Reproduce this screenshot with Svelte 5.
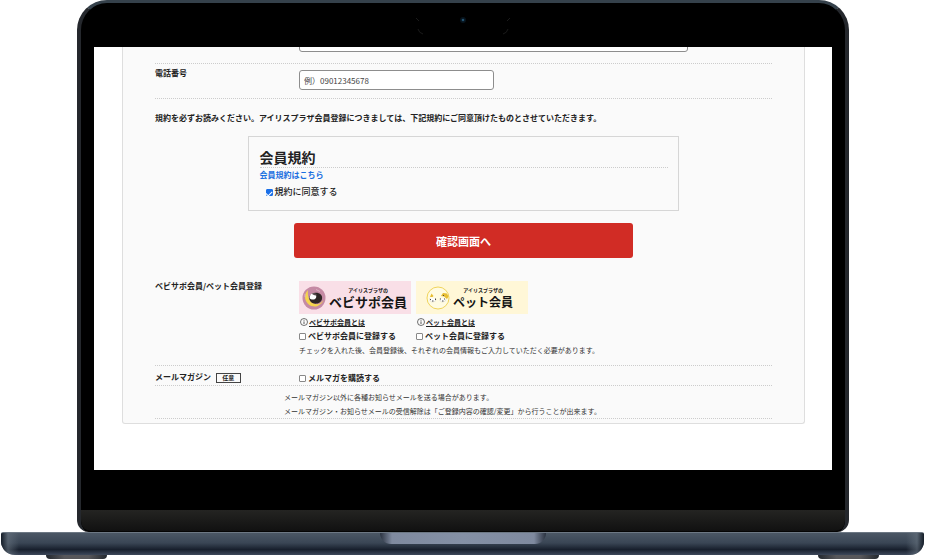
<script lang="ts">
  let phone = '';
  let address = '';
  let agreed = true;
  let babySupport = false;
  let pet = false;
  let mailMagazine = false;
</script>

<div class="laptop">
  <div class="lid">
    <div class="bezel-top">
      <svg width="94" height="20" viewBox="0 0 94 20" aria-hidden="true">
        <path d="M0 2l3 3M2 13q1 4 5 5M94 2l-3 3M92 13q-1 4-5 5" fill="none" stroke="#1b1b1b" />
        <circle cx="47" cy="4" r="3" fill="#07131c" />
        <circle cx="47" cy="4" r="1.3" fill="#23516e" />
      </svg>
    </div>

    <main class="screen">
      <form class="panel" on:submit|preventDefault>
        <div class="row cut">
          <span></span>
          <div class="clip">
            <input class="text-field wide" type="text" aria-label="住所" bind:value={address} />
          </div>
        </div>

        <div class="row phone">
          <label class="heading" for="phone">電話番号</label>
          <input
            id="phone"
            class="text-field"
            type="tel"
            placeholder="例）09012345678"
            bind:value={phone}
          />
        </div>

        <p class="lead">規約を必ずお読みください。アイリスプラザ会員登録につきましては、下記規約にご同意頂けたものとさせていただきます。</p>

        <section class="terms">
          <h2>会員規約</h2>
          <a class="terms-link" href="#terms">会員規約はこちら</a>
          <label class="check agree">
            <input type="checkbox" bind:checked={agreed} />
            規約に同意する
          </label>
        </section>

        <button class="submit" type="submit">確認画面へ</button>

        <div class="row clubs">
          <span class="heading">ベビサポ会員/ペット会員登録</span>
          <div>
            <div class="club-list">
              <div class="club">
                <div class="banner pink">
                  <svg width="24" height="24" viewBox="0 0 24 24" aria-hidden="true">
                    <circle cx="12" cy="12" r="11.5" fill="#c58aa4" />
                    <path d="M6 4A9.500 9.500 0 1 0 21.500 14C18 20 10 19 7.500 14C6 11 5.500 7 6 4Z" fill="#f5d44e" />
                    <path d="M9 16c-3-3-2-8 3-9 5-1 9 2 8 6-1 5-8 6-11 3z" fill="#2d2524" />
                    <path d="M8 10c1-3 4-3 6-1 1 3-1 5-3.500 4.500-2 0-3.500-1-2.500-3.500z" fill="#fff" />
                    <path d="M10 8c2-2 4-1 5 1-2 1-3 0-5-1z" fill="#54484a" />
                    <path d="M14 3.500l4 2M3 8v3" stroke="#dcb2c3" />
                  </svg>
                  <span class="banner-text">
                    <small>アイリスプラザの</small>
                    <strong>ベビサポ会員</strong>
                  </span>
                </div>
                <a class="about" href="#baby">
                  <svg width="8" height="8" viewBox="0 0 8 8" aria-hidden="true">
                    <circle cx="4" cy="4" r="3.500" fill="none" stroke="#333" stroke-width="0.700" />
                    <path d="M4 3.400v2.600M4 1.900v0.800" stroke="#333" stroke-width="0.800" />
                  </svg>
                  <span>ベビサポ会員とは</span>
                </a>
                <label class="check">
                  <input type="checkbox" bind:checked={babySupport} />
                  ベビサポ会員に登録する
                </label>
              </div>

              <div class="club">
                <div class="banner cream">
                  <svg width="24" height="24" viewBox="0 0 24 24" aria-hidden="true">
                    <circle cx="12" cy="12" r="11" fill="#fffbe2" stroke="#f0d45b" />
                    <path d="M4 11l1.500-3.500 2 2.500-1 1z" fill="#e7bd32" />
                    <path d="M15 10l2-3 4 .5 1.500 3-1.500 2.500-3-2.500z" fill="#e7bd32" />
                    <path d="M4 12q-1 4 3 4 3 0 3-3M14 12q-1 4 3 4 3-.5 3-3" fill="#fff" stroke="#d8d5c6" stroke-width="0.600" />
                    <path d="M4.500 13v1M9.500 12.500v1.500M6 15h1.500M14.500 12.500v1M18.500 12.500v1M16 15h1.500M17 10l1-1" stroke="#4c4a45" />
                  </svg>
                  <span class="banner-text">
                    <small>アイリスプラザの</small>
                    <strong>ペット会員</strong>
                  </span>
                </div>
                <a class="about" href="#pet">
                  <svg width="8" height="8" viewBox="0 0 8 8" aria-hidden="true">
                    <circle cx="4" cy="4" r="3.500" fill="none" stroke="#333" stroke-width="0.700" />
                    <path d="M4 3.400v2.600M4 1.900v0.800" stroke="#333" stroke-width="0.800" />
                  </svg>
                  <span>ペット会員とは</span>
                </a>
                <label class="check">
                  <input type="checkbox" bind:checked={pet} />
                  ペット会員に登録する
                </label>
              </div>
            </div>
            <p class="note">チェックを入れた後、会員登録後、それぞれの会員情報もご入力していただく必要があります。</p>
          </div>
        </div>

        <div class="row mail">
          <span class="heading">メールマガジン <span class="tag">任意</span></span>
          <label class="check">
            <input type="checkbox" bind:checked={mailMagazine} />
            メルマガを購読する
          </label>
        </div>

        <div class="mail-notes">
          <p class="note">メールマガジン以外に各種お知らせメールを送る場合があります。</p>
          <p class="note">メールマガジン・お知らせメールの受信解除は「ご登録内容の確認/変更」から行うことが出来ます。</p>
        </div>
      </form>
    </main>

    <div class="bezel-bottom"></div>
    <div class="hinge"></div>
  </div>

  <div class="base">
    <div class="notch"></div>
  </div>
  <div class="feet">
    <span></span>
    <span></span>
  </div>
</div>

<style>
  :global(body) {
    background: #fff;
  }

  .laptop {
    overflow: hidden;
    color: #222;
    font-family: 'Noto Sans CJK JP', 'Noto Sans', sans-serif;
    font-size: 8px;
    line-height: 12px;
  }

  .laptop * {
    box-sizing: border-box;
  }

  p,
  h2 {
    margin: 0;
  }

  /* Lid */
  .lid {
    margin: 0 76px 0 77px;
    border: solid #25282d;
    border-width: 3px 4px 0;
    border-top-color: #35414b;
    border-radius: 30px 30px 12px 12px;
    background: #000;
    overflow: hidden;
  }

  .bezel-top {
    display: flex;
    justify-content: center;
    height: 44px;
    padding-top: 13px;
  }

  .bezel-bottom {
    height: 40px;
  }

  .hinge {
    height: 22px;
    border-bottom: 1px solid #050505;
    border-radius: 0 0 10px 10px;
    background: linear-gradient(#242422, #111);
  }

  .screen {
    margin: 0 13px;
    padding: 0 27px 46px 28px;
    background: #fff;
  }

  /* Form */
  .panel {
    padding: 0 32px 4px;
    border: solid #dedede;
    border-width: 0 1px 1px;
    border-radius: 0 0 3px 3px;
    background: #fafafa;
  }

  .row {
    display: grid;
    grid-template-columns: 144px 1fr;
    align-items: start;
    border-bottom: 1px dotted #ccc;
  }

  .row.cut {
    padding-bottom: 11px;
  }

  /* Only the lower edge of the scrolled-out field is visible */
  .clip {
    display: flex;
    align-items: flex-end;
    height: 5px;
    overflow: hidden;
  }

  .row.phone {
    padding: 6px 0 8px;
  }

  .heading {
    font-weight: 700;
    line-height: 8px;
  }

  .row.phone .heading {
    line-height: 6px;
  }

  .text-field {
    flex: none;
    width: 195px;
    height: 20px;
    padding: 0 4px;
    border: 1px solid #8d8d8d;
    border-radius: 3px;
    background: #fff;
    color: #333;
    font: inherit;
  }

  .text-field.wide {
    width: 389px;
  }

  .text-field::placeholder {
    color: #444;
    opacity: 1;
  }

  .lead {
    padding: 13px 0 12px;
    font-weight: 700;
  }

  .terms {
    width: 70%;
    margin: 0 auto;
    padding: 11px 10px 12px 11px;
    border: 1px solid #d6d6d6;
  }

  .terms h2 {
    padding-bottom: 1px;
    border-bottom: 1px dotted #ccc;
    font-size: 14px;
    line-height: 18px;
    font-weight: 700;
  }

  .terms-link {
    display: block;
    padding-top: 1px;
    color: #1a6fe0;
    font-weight: 700;
    text-decoration: none;
  }

  .check {
    display: flex;
    align-items: center;
    gap: 2px;
    font-weight: 700;
  }

  .check.agree {
    padding: 5px 0 0 6px;
    font-size: 9px;
    font-weight: 500;
  }

  .check input {
    display: grid;
    place-items: center;
    flex: none;
    width: 7px;
    height: 7px;
    margin: 0;
    border: 1px solid #888;
    border-radius: 1px;
    background: #fff;
    appearance: none;
  }

  .check input:checked {
    border-color: #1a6fe8;
    background: #1a6fe8;
  }

  .check input:checked::before {
    content: '';
    width: 3px;
    height: 5px;
    border: solid #fff;
    border-width: 0 1px 1px 0;
    transform: rotate(45deg);
  }

  .submit {
    display: block;
    width: 55%;
    height: 35px;
    margin: 12px auto 23px;
    padding: 0;
    border: 0;
    border-radius: 3px;
    background: #d12c25;
    color: #fff;
    font: inherit;
    font-size: 11px;
    font-weight: 700;
    cursor: pointer;
  }

  .row.clubs {
    padding-bottom: 8px;
  }

  .row.clubs .heading {
    line-height: 10px;
  }

  .club-list {
    display: flex;
    gap: 5px;
  }

  .banner {
    display: flex;
    align-items: center;
    gap: 3px;
    width: 112px;
    height: 33px;
    padding-left: 3px;
    color: #151515;
  }

  .banner.pink {
    background: #f9dfe7;
  }

  .banner.cream {
    padding-left: 10px;
    background: #fff7d7;
  }

  .banner svg {
    flex: none;
  }

  .banner-text {
    display: flex;
    flex-direction: column;
    white-space: nowrap;
  }

  .banner small {
    font-size: 5px;
    line-height: 8px;
    font-weight: 700;
    text-align: center;
  }

  .banner strong {
    font-size: 13px;
    line-height: 16px;
    font-weight: 700;
  }

  .banner.cream strong {
    font-size: 12px;
  }

  .about {
    display: flex;
    align-items: center;
    gap: 1px;
    height: 14px;
    padding: 2px 0 0 1px;
    color: #222;
    font-size: 7px;
    font-weight: 700;
    text-decoration: none;
  }

  .about span {
    border-bottom: 1px solid #222;
    line-height: 8px;
  }

  .club .check {
    padding-top: 2px;
  }

  .note {
    color: #333;
    font-size: 7px;
    line-height: 14px;
  }

  .row.clubs .note {
    padding-top: 1px;
  }

  .row.mail {
    align-items: center;
    padding: 6px 0 1px;
  }

  .tag {
    display: inline-block;
    width: 25px;
    margin-left: 3px;
    border: 1px solid #444;
    font-size: 6px;
    line-height: 8px;
    text-align: center;
  }

  .mail-notes {
    padding-left: 129px;
    padding-top: 4px;
    border-bottom: 1px dotted #ccc;
  }

  /* Base */
  .base {
    display: flex;
    justify-content: center;
    align-items: flex-start;
    height: 23px;
    margin: 0 1px;
    border-top: 1px solid #6d7884;
    border-radius: 2px 2px 14px 14px;
    background:
      linear-gradient(90deg, #141c27, #66727e99 7px, transparent 18px, transparent calc(100% - 18px), #66727e99 calc(100% - 7px), #141c27),
      linear-gradient(#4b5765, #3a4655 45%, #18202d 75%, #3d485b);
  }

  .notch {
    width: 166px;
    height: 11px;
    border-radius: 0 0 11px 11px;
    background: linear-gradient(90deg, #2a3240, #7f8a9f 12px, #8490a5 50%, #7f8a9f calc(100% - 12px), #2a3240);
  }

  .feet {
    display: flex;
    justify-content: space-between;
    padding: 0 46px;
  }

  .feet span {
    width: 61px;
    height: 4px;
    border-radius: 0 0 8px 8px;
    background: linear-gradient(90deg, #23282f, #57575b 30%, #57575b 70%, #23282f);
  }
</style>
